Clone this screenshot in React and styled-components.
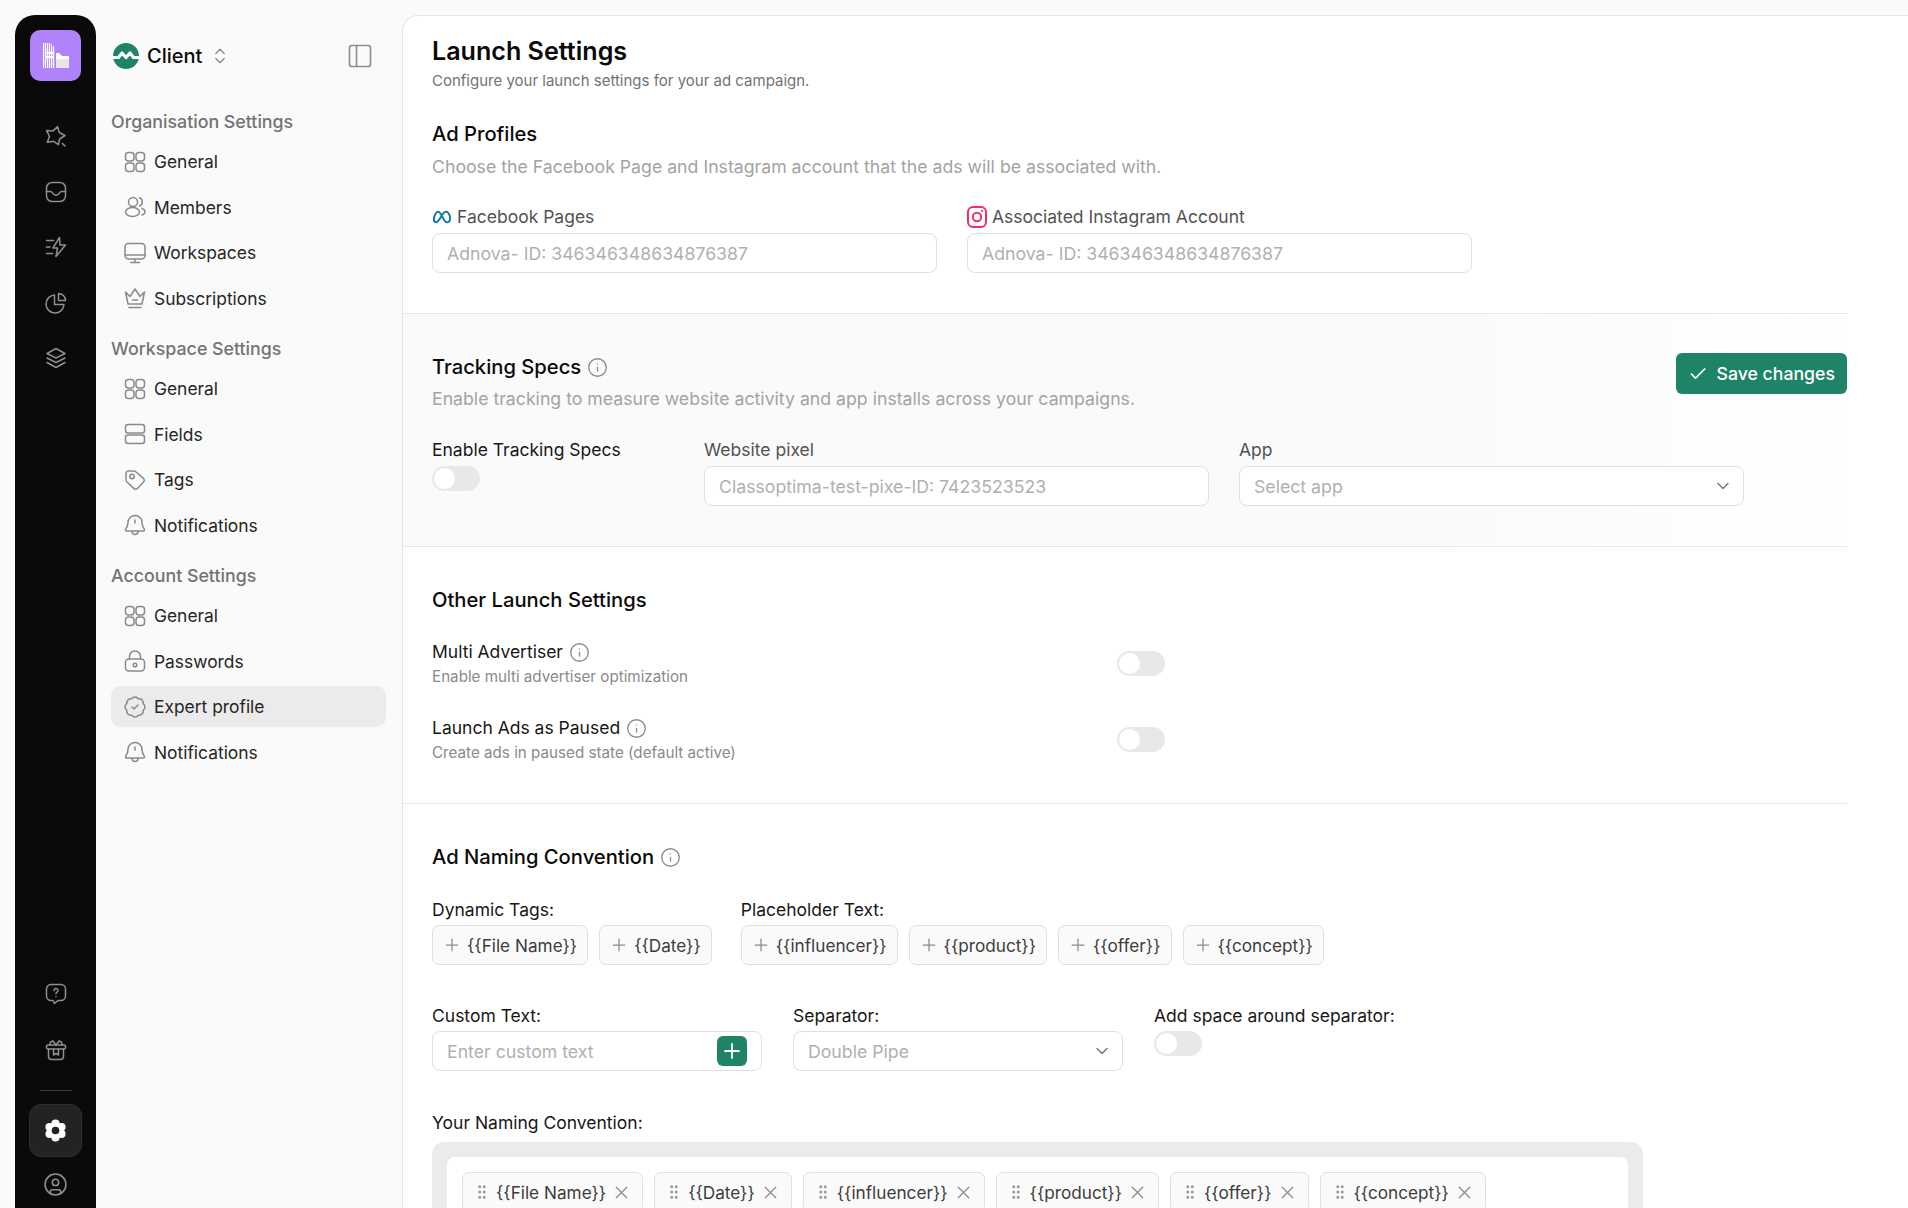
import React from 'react';
import styled, { createGlobalStyle } from 'styled-components';
import {
  BadgeCheck,
  Check,
  ChevronDown,
  ChevronsUpDown,
  CircleUser,
  GripVertical,
  Info,
  PanelLeft,
  Plus,
  X,
} from 'lucide-react';

const Outline = ({ size = 22, width = 1.5, children }) => (
  <svg
    width={size}
    height={size}
    viewBox="0 0 24 24"
    fill="none"
    stroke="currentColor"
    strokeWidth={width}
    strokeLinecap="round"
    strokeLinejoin="round"
  >
    {children}
  </svg>
);

const GridIcon = () => (
  <Outline size={24}>
    <rect x="2.5" y="2.5" width="8.5" height="8.5" rx="3" />
    <rect x="13" y="2.5" width="8.5" height="8.5" rx="3" />
    <rect x="2.5" y="13" width="8.5" height="8.5" rx="3" />
    <rect x="13" y="13" width="8.5" height="8.5" rx="3" />
  </Outline>
);

const UsersIcon = () => (
  <Outline size={24}>
    <circle cx="10" cy="7" r="4.5" />
    <ellipse cx="9.5" cy="17" rx="7" ry="4.5" />
    <path d="M16.5 2.8a4.4 4.4 0 0 1 0 8.2" />
    <path d="M19 13.5c2 .7 3 2 3 3.3s-1 2.5-3 3.2" />
  </Outline>
);

const MonitorIcon = () => (
  <Outline size={24}>
    <rect x="2" y="2.5" width="20" height="15.5" rx="3.5" />
    <path d="M2 14h20M12 18v3.5M7.5 21.5h9" />
  </Outline>
);

const CrownIcon = () => (
  <Outline size={24}>
    <path d="M2.5 6 7 10.5 12 3l5 7.5L21.5 6 19 18H5z" />
    <path d="M9.5 14h5M6 21.5h12" />
  </Outline>
);

const FieldsIcon = () => (
  <Outline size={24}>
    <rect x="2.5" y="2.5" width="19" height="8.5" rx="2.5" />
    <rect x="2.5" y="13" width="19" height="8.5" rx="2.5" />
  </Outline>
);

const TagIcon = () => (
  <Outline size={24}>
    <path d="M3 5.5A2.5 2.5 0 0 1 5.5 3h5.2c.9 0 1.8.4 2.4 1l7.3 6.4c1.1 1 1.1 2.6.1 3.6l-6.1 6.4c-1 1-2.6 1-3.6 0L4 14c-.6-.6-1-1.5-1-2.4z" />
    <circle cx="9" cy="8.5" r="2.2" />
  </Outline>
);

const BellIcon = () => (
  <Outline size={24}>
    <path d="M12 2.5A7 7 0 0 0 5 9.5c0 4.5-2.5 6-2.5 7.5 0 .6.4 1 1 1h17c.6 0 1-.4 1-1 0-1.5-2.5-3-2.5-7.5a7 7 0 0 0-7-7z" />
    <path d="M9 18.5a3 3 0 0 0 6 0M12 7v3" />
  </Outline>
);

const LockIcon = () => (
  <Outline size={24}>
    <rect x="2.5" y="10" width="19" height="12" rx="3.5" />
    <path d="M6.5 10V7.5a5.5 5.5 0 0 1 11 0V10" />
    <circle cx="12" cy="16" r="1.8" />
  </Outline>
);

const StarIcon = () => (
  <Outline size={24}>
    <path d="M13.6 2.6 15.3 8.5 21 11.5 15.600 15 14.400 20.600 9.600 17.300 3.300 18.300 5.500 12.300 2.600 6.600 9 6.900z" />
    <path d="M18.500 19.500 21 22" />
  </Outline>
);

const InboxIcon = () => (
  <Outline size={24}>
    <rect x="2.5" y="2.500" width="19" height="19" rx="5.500" />
    <path d="M2.500 11.500h4c1 0 1.500.5 2 1.500s1.200 2.200 3.500 2.200 3-1.200 3.500-2.200 1-1.500 2-1.500h4" />
  </Outline>
);

const FlashIcon = () => (
  <Outline size={24}>
    <path d="M15.500 2.500 9 13h4.500L12 21.500 21.500 10H16z" />
    <path d="M2.500 5.500h7M2.500 12h3.500M2.500 18.500h6" />
  </Outline>
);

const PieIcon = () => (
  <Outline size={24}>
    <path d="M10.500 4a9 9 0 1 0 9.500 9.500h-9.500z" />
    <path d="M14.500 2.500a7 7 0 0 1 7 7h-7z" />
  </Outline>
);

const LayersIcon = () => (
  <Outline size={24}>
    <path d="M12 2.500 3 7.500l9 4.500 9-4.500z" />
    <path d="M3 12l9 4.500 9-4.500" />
    <path d="M3 16.500l9 5 9-5" />
  </Outline>
);

const HelpIcon = () => (
  <Outline size={24}>
    <path d="M7 2.500h10a4.500 4.500 0 0 1 4.500 4.500v7a4.500 4.500 0 0 1-4.500 4.500h-3L10.500 21.500 9 18.500H7A4.500 4.500 0 0 1 2.500 14V7A4.500 4.500 0 0 1 7 2.500z" />
    <path d="M10 8.500a2 2 0 1 1 3 1.700c-.7.4-1 .8-1 1.600" />
    <path d="M12 14.500v.1" />
  </Outline>
);

const GiftIcon = () => (
  <Outline size={24}>
    <rect x="2.500" y="7" width="19" height="4" rx="1.500" />
    <path d="M4.500 11v7.500a3 3 0 0 0 3 3h9a3 3 0 0 0 3-3V11" />
    <path d="M12 7 9 3 6.500 4 6 7M12 7l3-4 2.500 1 .5 3" />
    <path d="M9.500 11v6l2.500-1.500 2.500 1.500v-6" />
  </Outline>
);

const GearIcon = () => (
  <svg width="23" height="23" viewBox="0 0 24 24">
    <g fill="#fff">
      <circle cx="12" cy="4.800" r="4.300" />
      <circle cx="18.200" cy="8.400" r="4.300" />
      <circle cx="18.200" cy="15.600" r="4.300" />
      <circle cx="12" cy="19.200" r="4.300" />
      <circle cx="5.800" cy="15.600" r="4.300" />
      <circle cx="5.800" cy="8.400" r="4.300" />
      <circle cx="12" cy="12" r="7" />
    </g>
    <circle cx="12" cy="12" r="4" fill="#232323" />
  </svg>
);

const ClientLogo = () => (
  <svg width="26" height="26" viewBox="0 0 26 26">
    <circle cx="13" cy="13" r="13" fill="#1f8467" />
    <path
      d="M0 14.500h5.500L9 10l4 4.500 4-4.500 3.500 4.500H26"
      fill="none"
      stroke="#fff"
      strokeWidth="3.200"
      strokeLinejoin="round"
    />
  </svg>
);

const LogoMark = () => (
  <svg width="26" height="26" viewBox="0 0 26 26">
    <defs>
      <pattern id="stipple" width="2" height="2" patternUnits="userSpaceOnUse">
        <rect width="1.200" height="2" fill="#fff" />
      </pattern>
    </defs>
    <path d="M0 0h7l5 5v20H0z" fill="url(#stipple)" />
    <rect x="3" y="9" width="7" height="2" fill="#fff" />
    <rect x="3" y="13" width="7" height="2" fill="#fff" />
    <path d="M13 10h3l3 3h7v3H13z" fill="#fff" />
    <path d="M13 16h13v9H13z" fill="#e6e6e6" />
  </svg>
);

const MetaIcon = () => (
  <svg width="20" height="16" viewBox="0 0 21 16">
    <defs>
      <linearGradient id="metaStroke" x1="0" y1="1" x2="1" y2="0">
        <stop offset="0" stopColor="#0668e1" />
        <stop offset="1" stopColor="#1f8467" />
      </linearGradient>
    </defs>
    <path
      d="M2 11c0-4 2-8.500 4.500-8.500 3.500 0 5.500 11 9 11 2 0 3.500-1.500 3.500-4 0-4-2-7-4.500-7C10.500 2.500 8 13.500 4.500 13.500 3 13.500 2 12.500 2 11z"
      fill="none"
      stroke="url(#metaStroke)"
      strokeWidth="2"
    />
  </svg>
);

const InstagramIcon = () => (
  <svg width="20" height="22" viewBox="0 0 20 22" fill="none" stroke="#f0305f" strokeWidth="2">
    <rect x="1" y="1" width="18" height="20" rx="5" />
    <circle cx="10" cy="11" r="4.200" />
    <path d="M15 4.800v.1" strokeLinecap="round" />
  </svg>
);

const RAIL_TOP = [StarIcon, InboxIcon, FlashIcon, PieIcon, LayersIcon];

const NAV_GROUPS = [
  {
    title: 'Organisation Settings',
    items: [
      { label: 'General', Icon: GridIcon },
      { label: 'Members', Icon: UsersIcon },
      { label: 'Workspaces', Icon: MonitorIcon },
      { label: 'Subscriptions', Icon: CrownIcon },
    ],
  },
  {
    title: 'Workspace Settings',
    items: [
      { label: 'General', Icon: GridIcon },
      { label: 'Fields', Icon: FieldsIcon },
      { label: 'Tags', Icon: TagIcon },
      { label: 'Notifications', Icon: BellIcon },
    ],
  },
  {
    title: 'Account Settings',
    items: [
      { label: 'General', Icon: GridIcon },
      { label: 'Passwords', Icon: LockIcon },
      { label: 'Expert profile', Icon: BadgeCheck, active: true },
      { label: 'Notifications', Icon: BellIcon },
    ],
  },
];

const DYNAMIC_TAGS = ['{{File Name}}', '{{Date}}'];
const PLACEHOLDER_TAGS = ['{{influencer}}', '{{product}}', '{{offer}}', '{{concept}}'];

const InfoMark = () => <Info size={21} color="#8a8a8a" strokeWidth={1.5} />;

const App = () => (
  <>
    <GlobalStyle />
    <Shell>
      <Rail>
        <LogoTile>
          <LogoMark />
        </LogoTile>
        <RailGroup>
          {RAIL_TOP.map((Icon, i) => (
            <RailButton key={i}>
              <Icon />
            </RailButton>
          ))}
        </RailGroup>
        <RailFooter>
          <RailButton>
            <HelpIcon />
          </RailButton>
          <RailButton>
            <GiftIcon />
          </RailButton>
          <RailDivider />
          <RailActive>
            <GearIcon />
          </RailActive>
          <RailButton>
            <CircleUser size={25} strokeWidth={1.5} />
          </RailButton>
        </RailFooter>
      </Rail>

      <Sidebar>
        <ClientRow>
          <ClientName>
            <ClientLogo />
            <span>Client</span>
            <ChevronsUpDown size={20} color="#8a8a8a" strokeWidth={1.6} />
          </ClientName>
          <PanelLeft size={28} color="#8f8f8f" strokeWidth={1.4} />
        </ClientRow>
        {NAV_GROUPS.map(group => (
          <NavGroup key={group.title}>
            <NavTitle>{group.title}</NavTitle>
            {group.items.map(({ label, Icon, active }) => (
              <NavItem key={label} $active={active}>
                <NavIcon>
                  <Icon size={24} strokeWidth={1.5} />
                </NavIcon>
                {label}
              </NavItem>
            ))}
          </NavGroup>
        ))}
      </Sidebar>

      <Main>
        <Section>
          <PageTitle>Launch Settings</PageTitle>
          <PageSubtitle>Configure your launch settings for your ad campaign.</PageSubtitle>
          <ProfilesTitle>Ad Profiles</ProfilesTitle>
          <SectionDesc>
            Choose the Facebook Page and Instagram account that the ads will be associated with.
          </SectionDesc>
          <ProfileFields>
            <Field>
              <FieldLabel $muted>
                <MetaIcon />
                Facebook Pages
              </FieldLabel>
              <TextInput placeholder="Adnova- ID: 346346348634876387" />
            </Field>
            <Field>
              <FieldLabel $muted>
                <InstagramIcon />
                Associated Instagram Account
              </FieldLabel>
              <TextInput placeholder="Adnova- ID: 346346348634876387" />
            </Field>
          </ProfileFields>
        </Section>

        <TrackingSection>
          <TrackingHead>
            <div>
              <SectionTitle>
                Tracking Specs
                <InfoMark />
              </SectionTitle>
              <TrackingDesc>
                Enable tracking to measure website activity and app installs across your campaigns.
              </TrackingDesc>
            </div>
            <SaveButton>
              <Check size={20} strokeWidth={2} />
              Save changes
            </SaveButton>
          </TrackingHead>
          <TrackingFields>
            <Field>
              <FieldLabel>Enable Tracking Specs</FieldLabel>
              <Toggle />
            </Field>
            <Field>
              <FieldLabel $muted>Website pixel</FieldLabel>
              <TextInput placeholder="Classoptima-test-pixe-ID: 7423523523" />
            </Field>
            <Field>
              <FieldLabel $muted>App</FieldLabel>
              <SelectBox>
                Select app
                <ChevronDown size={20} color="#737373" strokeWidth={1.6} />
              </SelectBox>
            </Field>
          </TrackingFields>
        </TrackingSection>

        <Section>
          <SectionTitle>Other Launch Settings</SectionTitle>
          <OptionList>
            <OptionRow>
              <div>
                <OptionLabel>
                  Multi Advertiser
                  <InfoMark />
                </OptionLabel>
                <OptionHint>Enable multi advertiser optimization</OptionHint>
              </div>
              <Toggle />
            </OptionRow>
            <OptionRow>
              <div>
                <OptionLabel>
                  Launch Ads as Paused
                  <InfoMark />
                </OptionLabel>
                <OptionHint>Create ads in paused state (default active)</OptionHint>
              </div>
              <Toggle />
            </OptionRow>
          </OptionList>
        </Section>

        <LastSection>
          <SectionTitle>
            Ad Naming Convention
            <InfoMark />
          </SectionTitle>
          <TagGroups>
            <TagField>
              <TagLabel>Dynamic Tags:</TagLabel>
              <ChipRow>
                {DYNAMIC_TAGS.map(tag => (
                  <Chip key={tag}>
                    <Plus size={20} color="#8a8a8a" strokeWidth={1.5} />
                    {tag}
                  </Chip>
                ))}
              </ChipRow>
            </TagField>
            <TagField>
              <TagLabel>Placeholder Text:</TagLabel>
              <ChipRow>
                {PLACEHOLDER_TAGS.map(tag => (
                  <Chip key={tag}>
                    <Plus size={20} color="#8a8a8a" strokeWidth={1.5} />
                    {tag}
                  </Chip>
                ))}
              </ChipRow>
            </TagField>
          </TagGroups>
          <CustomRow>
            <TagField>
              <TagLabel>Custom Text:</TagLabel>
              <InputWrap>
                <BareInput placeholder="Enter custom text" />
                <AddButton>
                  <Plus size={24} strokeWidth={1.8} />
                </AddButton>
              </InputWrap>
            </TagField>
            <TagField>
              <TagLabel>Separator:</TagLabel>
              <SelectBox>
                Double Pipe
                <ChevronDown size={20} color="#737373" strokeWidth={1.6} />
              </SelectBox>
            </TagField>
            <TagField>
              <TagLabel>Add space around separator:</TagLabel>
              <Toggle />
            </TagField>
          </CustomRow>
          <ConventionLabel>Your Naming Convention:</ConventionLabel>
          <ConventionOuter>
            <ConventionInner>
              {[...DYNAMIC_TAGS, ...PLACEHOLDER_TAGS].map(tag => (
                <TokenChip key={tag}>
                  <GripVertical size={18} color="#9a9a9a" strokeWidth={2} />
                  {tag}
                  <X size={21} color="#8a8a8a" strokeWidth={1.4} />
                </TokenChip>
              ))}
            </ConventionInner>
          </ConventionOuter>
        </LastSection>
      </Main>
    </Shell>
  </>
);

export default App;

const GlobalStyle = createGlobalStyle`
  html, body {
    margin: 0;
    height: 100%;
    background: #fafafa;
    font-family: Inter, "Liberation Sans", sans-serif;
    color: #171717;
  }

  * {
    box-sizing: border-box;
  }

  input {
    font-family: inherit;
  }
`;

const Shell = styled.div`
  height: 1208px;
  padding: 15px 0 0 15px;
  display: flex;
  overflow: hidden;
`;

const Rail = styled.aside`
  width: 81px;
  flex-shrink: 0;
  padding-top: 15px;
  display: flex;
  flex-direction: column;
  align-items: center;
  background: #0a0a0a;
  border-radius: 20px 20px 0 0;
  color: #8f8f8f;
`;

const LogoTile = styled.div`
  width: 51px;
  height: 51px;
  display: flex;
  align-items: center;
  justify-content: center;
  background: #b083fa;
  border-radius: 10px;
`;

const RailGroup = styled.div`
  margin-top: 27.500px;
  display: flex;
  flex-direction: column;
`;

const RailButton = styled.div`
  width: 56px;
  height: 55.500px;
  display: flex;
  align-items: center;
  justify-content: center;
`;

const RailFooter = styled.div`
  margin-top: auto;
  margin-bottom: -4px;
  display: flex;
  flex-direction: column;
  align-items: center;
`;

const RailDivider = styled.div`
  width: 32px;
  height: 1px;
  margin: 12px 0 13px;
  background: #3a3a3a;
`;

const RailActive = styled.div`
  width: 53px;
  height: 53px;
  display: flex;
  align-items: center;
  justify-content: center;
  background: #232323;
  border: 1px solid #2f2f2f;
  border-radius: 12px;
`;

const Sidebar = styled.nav`
  width: 306px;
  flex-shrink: 0;
  padding: 0 16px 0 15px;
`;

const ClientRow = styled.div`
  height: 26px;
  margin-top: 28px;
  padding: 0 12px 0 2px;
  display: flex;
  align-items: center;
  justify-content: space-between;
`;

const ClientName = styled.div`
  display: flex;
  align-items: center;
  gap: 8px;
  font-size: 20px;
  font-weight: 500;
  color: #0a0a0a;
`;

const NavGroup = styled.div`
  margin-top: 41px;

  & + & {
    margin-top: 18.500px;
  }
`;

const NavTitle = styled.div`
  height: 24px;
  margin-bottom: 7px;
  line-height: 24px;
  font-size: 17.800px;
  font-weight: 500;
  color: #737373;
`;

const NavItem = styled.div`
  height: 41px;
  margin-top: 4.500px;
  padding-left: 12px;
  display: flex;
  align-items: center;
  gap: 7px;
  font-size: 17.400px;
  color: #262626;
  background: ${({ $active }) => ($active ? '#ebebeb' : 'transparent')};
  border-radius: 10px;
`;

const NavIcon = styled.span`
  width: 24px;
  height: 24px;
  display: flex;
  color: #8a8a8a;
`;

const Main = styled.main`
  flex: 1;
  min-width: 0;
  background: #fff;
  border: 1px solid #e5e5e5;
  border-right: 0;
  border-bottom: 0;
  border-radius: 16px 0 0 0;
`;

const Section = styled.section`
  margin-right: 61px;
  padding: 39px 0 40px 29px;
  border-bottom: 1px solid #e8e8e8;

  &:first-child {
    padding-top: 19px;
  }
`;

const TrackingSection = styled(Section)`
  background: linear-gradient(90deg, #fafafa 0%, #fafafa 70%, #ffffff 100%);
`;

const LastSection = styled(Section)`
  border-bottom: 0;
`;

const PageTitle = styled.h1`
  margin: 0;
  line-height: 32px;
  font-size: 25.100px;
  font-weight: 600;
  color: #0a0a0a;
`;

const PageSubtitle = styled.p`
  margin: 4px 0 0;
  line-height: 20px;
  font-size: 15px;
  color: #737373;
`;

const SectionTitle = styled.h2`
  margin: 0;
  display: flex;
  align-items: center;
  gap: 6px;
  line-height: 28px;
  font-size: 20.200px;
  font-weight: 500;
  color: #0a0a0a;
`;

const ProfilesTitle = styled(SectionTitle)`
  margin-top: 29px;
`;

const SectionDesc = styled.p`
  margin: 7px 0 0;
  line-height: 24px;
  font-size: 17.700px;
  color: #a3a3a3;
`;

const TrackingDesc = styled(SectionDesc)`
  margin-top: 6px;
`;

const ProfileFields = styled.div`
  margin-top: 26px;
  display: grid;
  grid-template-columns: 505px 505px;
  gap: 30px;
`;

const Field = styled.div`
  display: flex;
  flex-direction: column;
  gap: 4px;
`;

const TagField = styled(Field)`
  gap: 3px;
`;

const FieldLabel = styled.label`
  display: flex;
  align-items: center;
  gap: 5px;
  height: 24px;
  line-height: 24px;
  font-size: 17.500px;
  color: ${({ $muted }) => ($muted ? '#525252' : '#171717')};
`;

const TextInput = styled.input`
  width: 100%;
  height: 40px;
  padding: 0 14px;
  font-size: 17.700px;
  background: #fff;
  border: 1px solid #e0e0e0;
  border-radius: 8px;
  outline: none;

  &::placeholder {
    color: #b0b0b0;
    opacity: 1;
  }
`;

const SelectBox = styled.div`
  height: 40px;
  padding: 0 10px 0 14px;
  display: flex;
  align-items: center;
  justify-content: space-between;
  font-size: 17.700px;
  color: #b0b0b0;
  background: #fff;
  border: 1px solid #e0e0e0;
  border-radius: 8px;
`;

const Toggle = styled.span`
  width: 48px;
  height: 25px;
  padding: 2px;
  display: block;
  background: #e8e8e8;
  border-radius: 13px;

  &::before {
    content: '';
    display: block;
    width: 21px;
    height: 21px;
    background: #fff;
    border-radius: 50%;
  }
`;

const TrackingHead = styled.div`
  display: flex;
  align-items: flex-start;
  justify-content: space-between;
`;

const SaveButton = styled.button`
  height: 41px;
  padding: 0 12px;
  display: flex;
  align-items: center;
  gap: 8px;
  font-family: inherit;
  font-size: 17.700px;
  font-weight: 500;
  color: #fff;
  background: #1f8467;
  border: 0;
  border-radius: 6px;
`;

const TrackingFields = styled.div`
  margin-top: 27px;
  display: grid;
  grid-template-columns: 242px 505px 505px;
  gap: 30px;
`;

const OptionList = styled.div`
  margin-top: 26px;
  display: flex;
  flex-direction: column;
  gap: 29px;
`;

const OptionRow = styled.div`
  width: 733px;
  display: flex;
  align-items: center;
  justify-content: space-between;
`;

const OptionLabel = styled.div`
  display: flex;
  align-items: center;
  gap: 6px;
  line-height: 24px;
  font-size: 17.500px;
  color: #171717;
`;

const OptionHint = styled.div`
  margin-top: 3px;
  line-height: 20px;
  font-size: 15.200px;
  color: #8a8a8a;
`;

const TagGroups = styled.div`
  margin-top: 27px;
  display: flex;
  gap: 29px;
`;

const TagLabel = styled.div`
  height: 24px;
  line-height: 24px;
  font-size: 17.500px;
  color: #171717;
`;

const ChipRow = styled.div`
  display: flex;
  gap: 11px;
`;

const Chip = styled.div`
  height: 40px;
  padding: 0 10px 0 9px;
  display: flex;
  align-items: center;
  gap: 5px;
  font-size: 17.200px;
  color: #3d3d3d;
  background: #fafafa;
  border: 1px solid #e0e0e0;
  border-radius: 7px;
`;

const CustomRow = styled.div`
  margin-top: 39px;
  display: grid;
  grid-template-columns: 330px 330px auto;
  justify-content: start;
  gap: 31px;
`;

const InputWrap = styled.div`
  height: 40px;
  padding: 0 14px;
  display: flex;
  align-items: center;
  justify-content: space-between;
  background: #fff;
  border: 1px solid #e0e0e0;
  border-radius: 8px;
`;

const BareInput = styled.input`
  flex: 1;
  min-width: 0;
  padding: 0;
  font-size: 17.700px;
  border: 0;
  outline: none;

  &::placeholder {
    color: #b0b0b0;
    opacity: 1;
  }
`;

const AddButton = styled.button`
  width: 30px;
  height: 30px;
  padding: 0;
  display: flex;
  align-items: center;
  justify-content: center;
  color: #fff;
  background: #1f8467;
  border: 0;
  border-radius: 6px;
`;

const ConventionLabel = styled(TagLabel)`
  margin-top: 40px;
`;

const ConventionOuter = styled.div`
  width: 1211px;
  margin-top: 7px;
  padding: 15px;
  background: #ebebeb;
  border-radius: 12px;
`;

const ConventionInner = styled.div`
  padding: 15px;
  display: flex;
  gap: 11px;
  background: #fff;
  border-radius: 8px;
`;

const TokenChip = styled.div`
  height: 40px;
  padding: 0 10px;
  display: flex;
  align-items: center;
  gap: 5px;
  font-size: 17.200px;
  color: #3d3d3d;
  background: #fafafa;
  border: 1px solid #e0e0e0;
  border-radius: 7px;
`;
